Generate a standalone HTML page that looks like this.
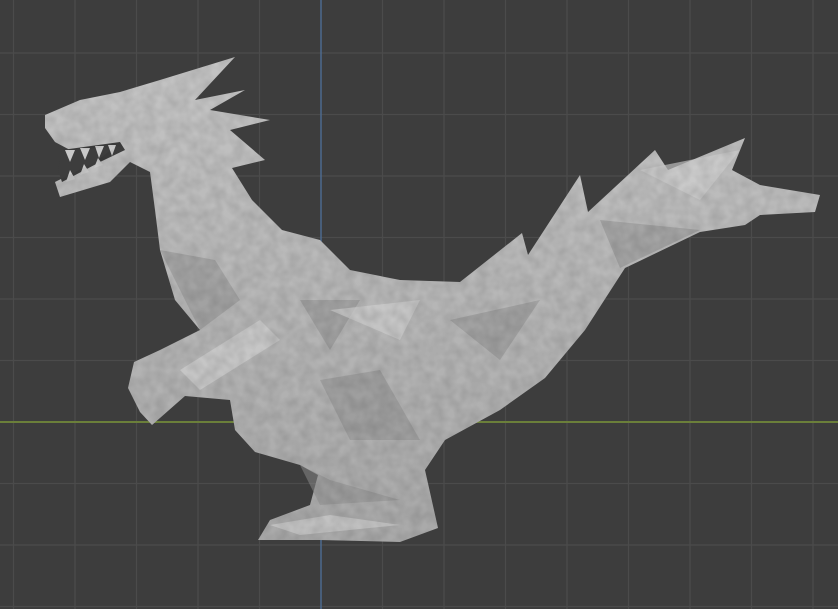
<!DOCTYPE html>
<html><head><style>
html,body{margin:0;padding:0;background:#3d3d3d;}
svg{display:block}
</style></head><body>
<svg width="838" height="609" viewBox="0 0 838 609" xmlns="http://www.w3.org/2000/svg">
<defs>
<linearGradient id="g" x1="0" y1="0" x2="0" y2="1">
<stop offset="0" stop-color="#c4c4c4"/><stop offset="1" stop-color="#a9a9a9"/>
</linearGradient>
<filter id="t"><feTurbulence type="fractalNoise" baseFrequency="0.09" numOctaves="2" seed="3"/><feColorMatrix type="matrix" values="0 0 0 0 0  0 0 0 0 0  0 0 0 0 0  0 0 0 -1.2 0.9"/><feComposite in2="SourceGraphic" operator="in"/></filter>
</defs>
<rect width="838" height="609" fill="#3d3d3d"/>
<g stroke="#4b4b4b" stroke-width="1.3">
<line x1="13.5" y1="0" x2="13.5" y2="609"/><line x1="75" y1="0" x2="75" y2="609"/>
<line x1="136.5" y1="0" x2="136.5" y2="609"/><line x1="198" y1="0" x2="198" y2="609"/>
<line x1="259.5" y1="0" x2="259.5" y2="609"/><line x1="382.5" y1="0" x2="382.5" y2="609"/>
<line x1="444" y1="0" x2="444" y2="609"/><line x1="505.5" y1="0" x2="505.5" y2="609"/>
<line x1="567" y1="0" x2="567" y2="609"/><line x1="628.5" y1="0" x2="628.5" y2="609"/>
<line x1="690" y1="0" x2="690" y2="609"/><line x1="751.5" y1="0" x2="751.5" y2="609"/>
<line x1="813" y1="0" x2="813" y2="609"/>
<line x1="0" y1="53" x2="838" y2="53"/><line x1="0" y1="114.5" x2="838" y2="114.5"/>
<line x1="0" y1="176" x2="838" y2="176"/><line x1="0" y1="237.5" x2="838" y2="237.5"/>
<line x1="0" y1="299" x2="838" y2="299"/><line x1="0" y1="360.5" x2="838" y2="360.5"/>
<line x1="0" y1="483.5" x2="838" y2="483.5"/><line x1="0" y1="545" x2="838" y2="545"/>
<line x1="0" y1="606.5" x2="838" y2="606.5"/>
</g>
<line x1="0" y1="422" x2="838" y2="422" stroke="#6b7f3a" stroke-width="2"/>
<line x1="321" y1="0" x2="321" y2="609" stroke="#4d6a8e" stroke-width="1.5"/>
<path fill="url(#g)" d="M45,115 L80,100 L120,92 L160,80 L235,57 L195,100 L245,90 L210,110 L270,120 L230,130 L265,160 L232,168 L252,200 L282,230 L320,240 L350,270 L400,280 L460,282 L522,233 L528,255 L580,175 L588,212 L655,150 L668,170 L745,138 L732,170 L760,185 L820,195 L815,212 L760,215 L745,225 L700,232 L625,268 L585,330 L545,378 L500,410 L445,440 L425,470 L438,528 L400,542 L320,540 L258,540 L270,520 L310,505 L318,475 L300,465 L255,452 L235,430 L230,400 L185,396 L152,425 L140,412 L128,388 L134,362 L160,350 L200,330 L175,300 L160,250 L155,210 L150,172 L130,162 L110,182 L60,197 L55,182 L95,162 L115,147 L70,150 L55,142 L45,128 Z"/>
<path fill="#3d3d3d" d="M62,150 L120,142 L125,150 L100,162 L62,182 L58,170 Z"/>
<g fill="#c8c8c8"><path d="M65,150 L70,162 L75,150Z M80,148 L85,160 L90,148Z M95,146 L99,158 L104,146Z M108,145 L112,156 L116,145Z M66,182 L70,170 L75,179Z M80,175 L84,164 L89,172Z M94,168 L98,158 L103,165Z"/></g>
<g fill="#8e8e8e" opacity="0.5">
<path d="M160,250 L200,330 L240,300 L215,260 Z"/>
<path d="M300,300 L360,300 L330,350 Z"/>
<path d="M320,380 L380,370 L420,440 L350,440 Z"/>
<path d="M450,320 L540,300 L500,360 Z"/>
<path d="M600,220 L700,230 L620,268 Z"/>
<path d="M300,465 L330,480 L400,500 L320,505 Z"/>
</g>
<g fill="#d2d2d2" opacity="0.6">
<path d="M180,370 L260,320 L280,340 L200,390 Z"/>
<path d="M330,310 L420,300 L400,340 Z"/>
<path d="M640,170 L740,150 L700,200 Z"/>
<path d="M270,525 L330,515 L400,525 L300,535 Z"/>
</g>
<path fill="#6a6a6a" opacity="0.14" filter="url(#t)" d="M45,115 L80,100 L120,92 L160,80 L235,57 L195,100 L245,90 L210,110 L270,120 L230,130 L265,160 L232,168 L252,200 L282,230 L320,240 L350,270 L400,280 L460,282 L522,233 L528,255 L580,175 L588,212 L655,150 L668,170 L745,138 L732,170 L760,185 L820,195 L815,212 L760,215 L745,225 L700,232 L625,268 L585,330 L545,378 L500,410 L445,440 L425,470 L438,528 L400,542 L320,540 L258,540 L270,520 L310,505 L318,475 L300,465 L255,452 L235,430 L230,400 L185,396 L152,425 L140,412 L128,388 L134,362 L160,350 L200,330 L175,300 L160,250 L155,210 L150,172 L130,162 L110,182 L60,197 L55,182 L95,162 L115,147 L70,150 L55,142 L45,128 Z"/>
</svg>
</body></html>
